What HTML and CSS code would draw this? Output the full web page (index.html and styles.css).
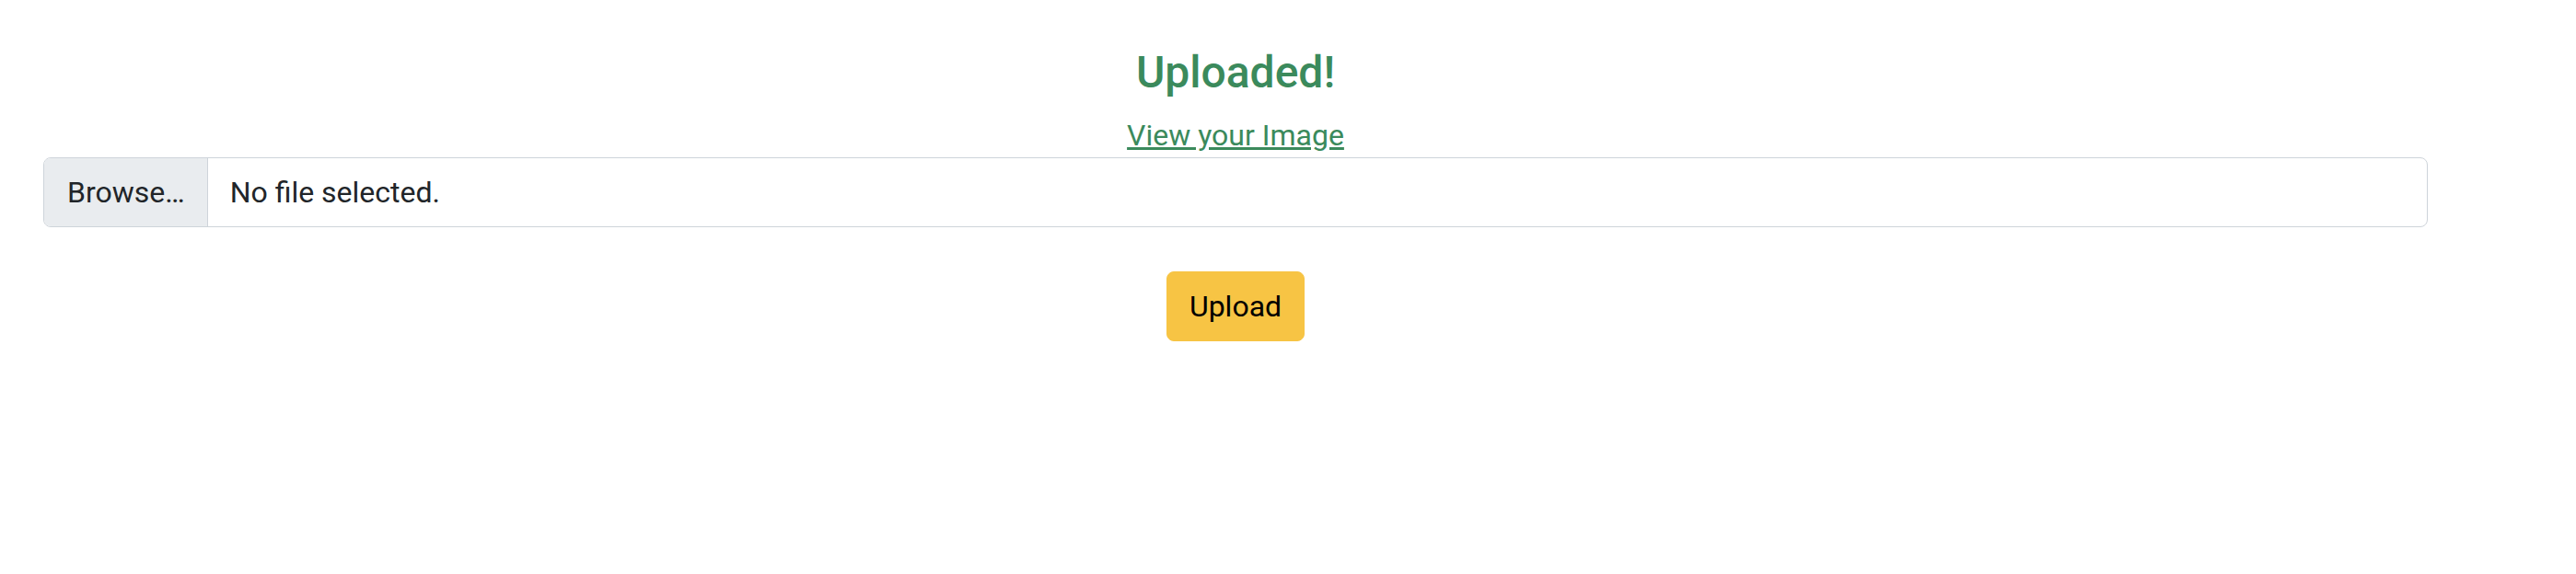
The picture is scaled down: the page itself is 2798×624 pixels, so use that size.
FILE: index.html
```html
<!DOCTYPE html>
<html>
<head>
<meta charset="utf-8">
<link rel="stylesheet" href="styles.css">
</head>
<body>
<main class="page">
  <h4 class="title">Uploaded!</h4>
  <div class="link-row"><a class="view-link" href="#">View your Image</a></div>
  <div class="file-input">
    <span class="browse">Browse…</span>
    <span class="file-name">No file selected.</span>
  </div>
  <div class="actions">
    <button class="btn-upload" type="button">Upload</button>
  </div>
</main>
</body>
</html>
```
FILE: styles.css
```css
html, body {
  margin: 0;
  padding: 0;
  background: #ffffff;
}
body {
  font-family: Roboto, "Liberation Sans", sans-serif;
  font-size: 32px;
  line-height: 1.5;
  color: #212529;
}
.page {
  width: 2590px;
  margin-left: 47px;
  padding-top: 50px;
  text-align: center;
}
.title {
  margin: 0 0 16px 0;
  font-size: 48px;
  font-weight: 500;
  line-height: 1.2;
  color: #3b8a5c;
}
.link-row {
  line-height: 47px;
}
.view-link {
  color: #3b8a5c;
  text-decoration: underline;
  text-underline-offset: 2px;
}
.file-input {
  display: flex;
  align-items: stretch;
  height: 76px;
  box-sizing: border-box;
  border: 1px solid #ced4da;
  border-radius: 8px;
  overflow: hidden;
  text-align: left;
}
.browse {
  display: flex;
  align-items: center;
  padding: 0 24px 0 25px;
  background: #e9ecef;
  border-right: 1px solid #ced4da;
  color: #212529;
}
.file-name {
  display: flex;
  align-items: center;
  padding-left: 24px;
  color: #212529;
}
.actions {
  margin-top: 48px;
  display: flex;
  justify-content: center;
}
.btn-upload {
  font-family: inherit;
  font-size: 32px;
  line-height: 48px;
  height: 76px;
  padding: 0 24px;
  background: #f7c444;
  border: 1px solid #f7c444;
  border-radius: 8px;
  color: #000000;
}
```
